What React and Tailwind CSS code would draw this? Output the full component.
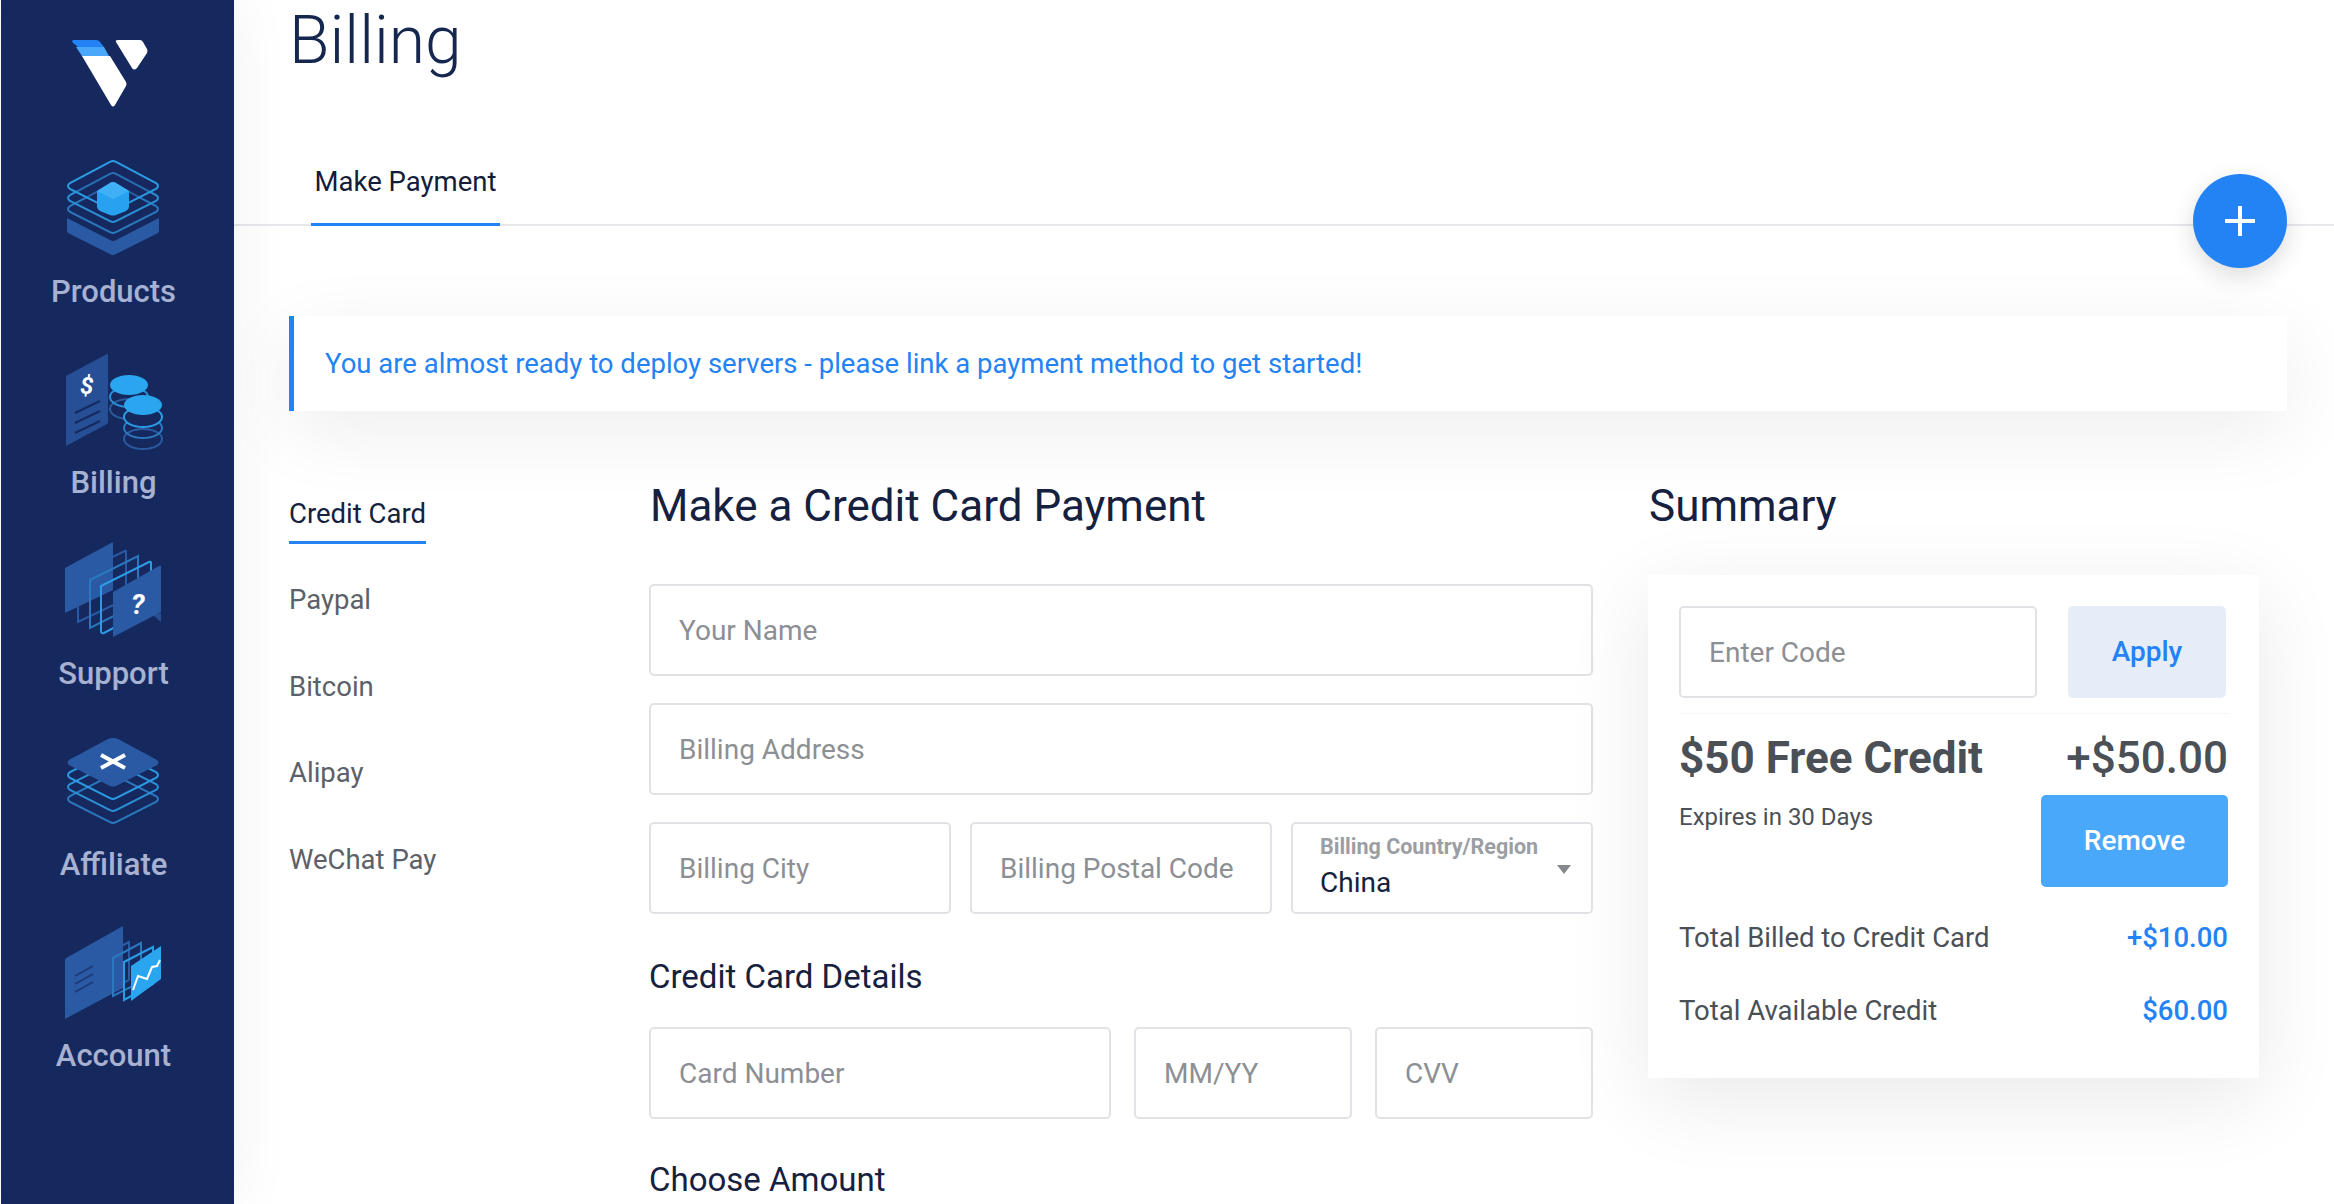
import React from 'react';

function Logo() {
  return (
    <svg width="84" height="68" viewBox="71 40 84 68" className="block">
      <path d="M73 40H95Q98 40 99 42L103 47H77L72 43Q70 40 73 40Z" fill="#2382f4" />
      <path d="M75 47H103L108 56H81Z" fill="#4aa8fb" />
      <path d="M81 56H109L125 82Q126 84 125 86L114 105Q112 108 110 105Z" fill="#fff" />
      <path d="M115 42Q114 40 117 40H139Q141 40 142 42L146 49Q147 51 146 53L136 68Q133 71 131 68Z" fill="#fff" />
    </svg>
  );
}

function ProductsIcon() {
  const ring = 'M47 10Q50 8 53 10L93 31Q97 34 93 37L53 57Q50 59 47 57L7 37Q3 34 7 31Z';
  return (
    <svg width="100" height="120" viewBox="0 0 100 120" fill="none">
      <path d="M4 66L47 88Q50 90 53 88L96 66V79Q96 81 93 82L53 102Q50 104 47 102L7 82Q4 81 4 79Z" fill="#2b5aa5" />
      <path d={ring} stroke="#2a78bd" strokeWidth="2" transform="translate(0 23)" />
      <path d={ring} stroke="#2b8fd6" strokeWidth="2" transform="translate(0 12)" />
      <path d={ring} stroke="#2b9be4" strokeWidth="2" fill="#16295f" fillOpacity="0.3" />
      <path d="M47 31Q50 29 53 31L66 39V55Q66 57 63 59L53 63Q50 64 47 63L37 59Q34 57 34 55V39Z" fill="#28a2f0" />
      <path d="M47 31Q50 29 53 31L66 39L50 47L34 39Z" fill="#3fb0f6" />
    </svg>
  );
}

function BillingIcon() {
  return (
    <svg width="100" height="120" viewBox="0 0 100 120" fill="none">
      <path d="M2 33L43 11Q44 10 44 12V79Q44 80 43 81L2 103Z" fill="#274f96" />
      <text x="16" y="51" fill="#fff" fontSize="24" fontWeight="700" fontStyle="italic" fontFamily="Roboto, sans-serif">$</text>
      <g stroke="#16295f" strokeWidth="2">
        <path d="M11 70L36 58" />
        <path d="M11 80L36 68" />
        <path d="M11 90L36 78" />
      </g>
      <ellipse cx="65" cy="66" rx="19" ry="10" stroke="#2a5a9e" strokeWidth="2" />
      <ellipse cx="65" cy="54" rx="19" ry="10" stroke="#2b8fd6" strokeWidth="2" />
      <ellipse cx="65" cy="42" rx="19" ry="10" fill="#2aa5ef" />
      <ellipse cx="79" cy="96" rx="19" ry="10" stroke="#2a5a9e" strokeWidth="2" />
      <ellipse cx="79" cy="85" rx="19" ry="10" stroke="#2a78bd" strokeWidth="2" />
      <ellipse cx="79" cy="74" rx="19" ry="10" stroke="#2b9be4" strokeWidth="2" fill="#16295f" />
      <ellipse cx="79" cy="62" rx="19" ry="10" fill="#2aa5ef" />
    </svg>
  );
}

function SupportIcon() {
  return (
    <svg width="100" height="120" viewBox="0 0 100 120" fill="none">
      <path d="M2 34L50 8V56L2 79Z" fill="#2b5aa5" />
      <path d="M15 40L62 17Q63 16 63 18V65L15 88Z" stroke="#2b5aa5" strokeWidth="2" />
      <path d="M27 46L75 22V70L27 94Z" stroke="#2a78bd" strokeWidth="2" />
      <path d="M38 52L86 28Q88 27 88 29V74L41 99Q38 100 38 97Z" stroke="#2b9be4" strokeWidth="2" />
      <path d="M98 79V88L90 81Z" fill="#274f96" />
      <path d="M50 58L96 32Q98 31 98 33V78L50 103Z" fill="#2b5aa5" />
      <text x="68" y="80" fill="#fff" fontSize="28" fontWeight="700" fontStyle="italic" fontFamily="Roboto, sans-serif">?</text>
    </svg>
  );
}

function AffiliateIcon() {
  const ring = 'M47 27Q50 25 53 27L93 47Q97 50 93 53L53 73Q50 75 47 73L7 53Q3 50 7 47Z';
  return (
    <svg width="100" height="120" viewBox="0 0 100 120" fill="none">
      <path d={ring} stroke="#2a78bd" strokeWidth="2" transform="translate(0 24)" />
      <path d={ring} stroke="#2b8fd6" strokeWidth="2" transform="translate(0 12)" />
      <path d={ring} stroke="#2b9be4" strokeWidth="2" />
      <path d="M45 14Q50 12 55 14L94 35Q97 38 94 40L55 60Q50 63 45 60L6 40Q3 38 6 35Z" fill="#2b5aa5" />
      <path d="M38 30L62 43M62 30L38 43" stroke="#fff" strokeWidth="4" />
    </svg>
  );
}

function AccountIcon() {
  return (
    <svg width="100" height="120" viewBox="0 0 100 120" fill="none">
      <path d="M2 45Q2 42 5 41L60 10V72L2 103Z" fill="#2b5aa5" />
      <g stroke="#1c3a78" strokeWidth="2">
        <path d="M12 60L30 50" />
        <path d="M12 68L30 58" />
        <path d="M12 76L30 66" />
      </g>
      <path d="M40 40L66 26V64L40 78Z" stroke="#2b5aa5" strokeWidth="2" />
      <path d="M50 42L78 27V66L50 80Z" stroke="#2a78bd" strokeWidth="2" />
      <path d="M61 46L90 31V68L61 84Z" stroke="#2b9be4" strokeWidth="2" />
      <path d="M68 50L98 30V63L68 85Z" fill="#2aa5ef" />
      <path d="M70 74L75 60L84 63L89 51L94 50L97 44" stroke="#fff" strokeWidth="2" />
    </svg>
  );
}

const navItems = [
  { label: 'Products', Icon: ProductsIcon },
  { label: 'Billing', Icon: BillingIcon },
  { label: 'Support', Icon: SupportIcon },
  { label: 'Affiliate', Icon: AffiliateIcon },
  { label: 'Account', Icon: AccountIcon },
];

const methods = ['Paypal', 'Bitcoin', 'Alipay', 'WeChat Pay'];

function Field({ placeholder, className }) {
  return (
    <div className={`h-[92px] flex items-center px-[28px] pt-[2px] bg-white border-2 border-[#e1e2e5] rounded-[5px] text-[28px] text-[#8c8f93] whitespace-nowrap ${className}`}>
      {placeholder}
    </div>
  );
}

export default function App() {
  return (
    <div className="h-[1204px] w-[2334px] overflow-hidden flex bg-white text-[#16213f]" style={{ fontFamily: 'Roboto, sans-serif' }}>
      {/* Sidebar */}
      <aside className="w-[233px] ml-[1px] shrink-0 bg-[#16295f] pr-[8px] flex flex-col items-center pt-[40px] shadow-[0_0_60px_rgba(0,0,0,0.06)] z-10">
        <div className="mb-[13px]">
          <Logo />
        </div>
        {navItems.map(({ label, Icon }) => (
          <div key={label} className="h-[191px] flex flex-col items-center justify-end">
            <Icon />
            <div className="h-[40px] leading-[40px] text-[31px] font-medium text-[#a7b1d2]">{label}</div>
          </div>
        ))}
      </aside>

      {/* Main */}
      <main className="relative flex-1 min-w-0 bg-white">
        <header className="h-[226px] bg-white border-b-2 border-[#e6e7eb] pl-[55px] relative">
          <h1 className="text-[66px] font-light leading-[82px] text-[#16274f]">Billing</h1>
          <div className="absolute left-[77px] bottom-[-2px] w-[189px] h-[65px] border-b-[3px] border-[#2382f4] flex justify-center text-[27.5px] leading-[41px] text-[#131c3a]">
            Make Payment
          </div>
        </header>

        <button className="absolute left-[1959px] top-[174px] w-[94px] h-[94px] rounded-full bg-[#2382f4] flex items-center justify-center shadow-[0_8px_24px_rgba(0,0,0,0.14)]">
          <svg width="32" height="32" viewBox="0 0 32 32" fill="#fff">
            <rect x="14" y="1" width="4" height="30" />
            <rect x="1" y="14" width="30" height="4" />
          </svg>
        </button>

        <div className="pl-[55px] pr-[47px] pt-[90px]">
          <div className="h-[95px] bg-white border-l-[5px] border-[#2382f4] flex items-center pl-[31px] text-[27.5px] text-[#2382f4] shadow-[0_20px_80px_rgba(0,0,0,0.07)]">
            You are almost ready to deploy servers - please link a payment method to get started!
          </div>

          <div className="flex mt-[65px]">
            {/* Payment methods */}
            <nav className="w-[360px] shrink-0 text-[27.5px] text-[#5c6068]">
              <div className="w-[137px] h-[68px] pt-[18px] leading-[40px] border-b-[3px] border-[#2382f4] text-[#16213f] whitespace-nowrap">
                Credit Card
              </div>
              <div className="pt-[13px]">
                {methods.map((m) => (
                  <div key={m} className="h-[86.5px] leading-[86.5px]">{m}</div>
                ))}
              </div>
            </nav>

            {/* Form */}
            <section className="w-[944px] shrink-0">
              <h2 className="text-[44px] leading-[60px] ml-[1px] text-[#16213f]">Make a Credit Card Payment</h2>
              <div className="flex flex-col gap-[27px] mt-[48px]">
                <Field placeholder="Your Name" />
                <Field placeholder="Billing Address" />
                <div className="flex gap-[19px]">
                  <Field placeholder="Billing City" className="w-[302px]" />
                  <Field placeholder="Billing Postal Code" className="w-[302px]" />
                  <div className="flex-1 min-w-0 h-[92px] relative bg-white border-2 border-[#e1e2e5] rounded-[5px] pl-[27px] pt-[11px]">
                    <div className="text-[21.5px] leading-[24px] font-bold text-[#9b9ea3] whitespace-nowrap">Billing Country/Region</div>
                    <div className="text-[28px] leading-[48px] text-[#16213f]">China</div>
                    <div className="absolute right-[20px] top-[41px] w-0 h-0 border-x-[7px] border-x-transparent border-t-[9px] border-t-[#85888d]" />
                  </div>
                </div>
              </div>
              <h3 className="text-[33px] leading-[40px] mt-[43px]">Credit Card Details</h3>
              <div className="flex gap-[23px] mt-[30px]">
                <Field placeholder="Card Number" className="w-[462px]" />
                <Field placeholder="MM/YY" className="w-[218px]" />
                <Field placeholder="CVV" className="flex-1 min-w-0" />
              </div>
              <h3 className="text-[33px] leading-[40px] mt-[41px]">Choose Amount</h3>
            </section>

            {/* Summary */}
            <section className="ml-[56px] flex-1 min-w-0">
              <h2 className="text-[44px] leading-[60px] text-[#16213f]">Summary</h2>
              <div className="w-[611px] h-[503px] mt-[39px] -ml-[1px] bg-white pl-[31px] pr-[31px] pt-[31px] shadow-[0_20px_80px_rgba(0,0,0,0.09)]">
                <div className="flex justify-between pb-[15px] border-b border-[#f5f6f7]">
                  <Field placeholder="Enter Code" className="w-[358px]" />
                  <div className="w-[158px] h-[92px] mr-[2px] rounded-[5px] bg-[#e6edf9] flex items-center justify-center text-[28px] font-medium text-[#2382f4]">Apply</div>
                </div>
                <div className="flex justify-between items-center h-[60px] mt-[14px] text-[44px] font-bold text-[#4b5057]">
                  <span>$50 Free Credit</span>
                  <span className="font-medium">+$50.00</span>
                </div>
                <div className="flex justify-between mt-[7px]">
                  <span className="text-[24px] leading-[30px] mt-[7px] text-[#4b5057]">Expires in 30 Days</span>
                  <div className="w-[187px] h-[92px] rounded-[5px] bg-[#4aa8fb] flex items-center justify-center text-[28px] font-medium text-white">Remove</div>
                </div>
                <div className="flex justify-between items-center h-[40px] mt-[31px] text-[27.5px]">
                  <span className="text-[#4b5057]">Total Billed to Credit Card</span>
                  <span className="font-medium text-[#2382f4]">+$10.00</span>
                </div>
                <div className="flex justify-between items-center h-[40px] mt-[33px] text-[27.5px]">
                  <span className="text-[#4b5057]">Total Available Credit</span>
                  <span className="font-medium text-[#2382f4]">$60.00</span>
                </div>
              </div>
            </section>
          </div>
        </div>
      </main>
    </div>
  );
}
